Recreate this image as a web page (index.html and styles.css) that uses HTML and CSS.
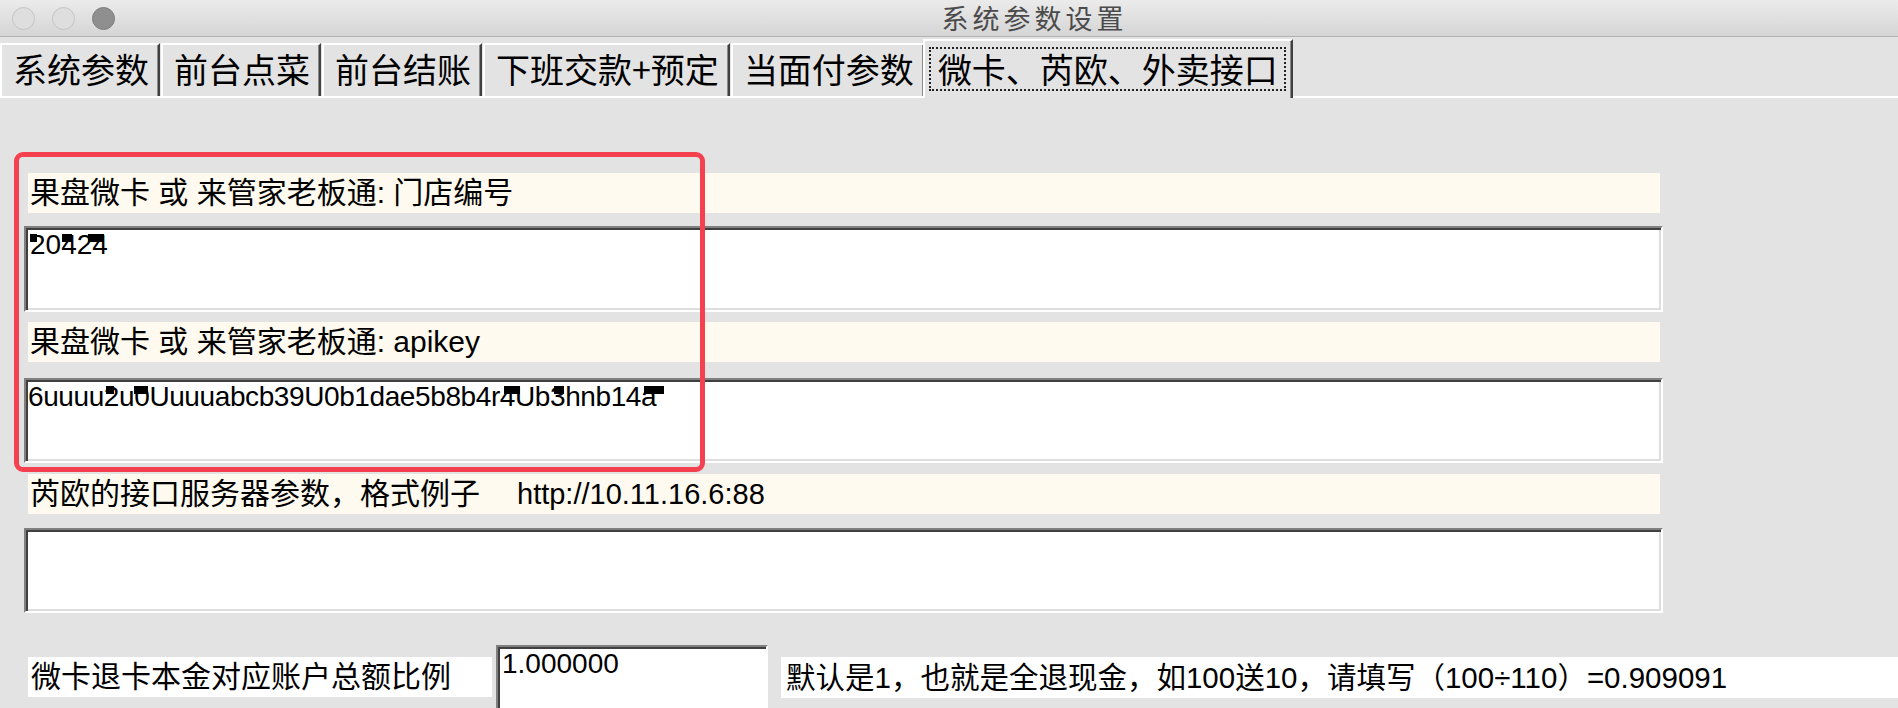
FILE: index.html
```html
<!DOCTYPE html>
<html>
<head>
	<meta charset="utf-8">
	<title>系统参数设置</title>
	<link rel="stylesheet" href="styles.css">
</head>
<body>
<div class="window">
	<div class="titlebar">
		<div class="lights">
			<span class="light"></span>
			<span class="light"></span>
			<span class="light light-dark"></span>
		</div>
		<div class="title">系统参数设置</div>
	</div>

	<div class="tabs">
		<a class="tab">系统参数</a>
		<a class="tab">前台点菜</a>
		<a class="tab">前台结账</a>
		<a class="tab">下班交款+预定</a>
		<a class="tab">当面付参数</a>
		<a class="tab active"><span class="focus">微卡、芮欧、外卖接口</span></a>
	</div>

	<div class="panel">
		<div class="field-label">果盘微卡 或 来管家老板通: 门店编号</div>
		<div class="field-input input-1">20424
			<i class="mask" style="left: 4px; width: 7px;"></i>
			<i class="mask" style="left: 36px; width: 10px;"></i>
			<i class="mask" style="left: 62px; width: 16px;"></i>
		</div>

		<div class="field-label label-2">果盘微卡 或 来管家老板通: apikey</div>
		<div class="field-input input-2">6uuuu2u0Uuuuabcb39U0b1dae5b8b4r4Ub3hnb14a
			<i class="mask" style="left: 80px; width: 8px;"></i>
			<i class="mask" style="left: 108px; width: 14px;"></i>
			<i class="mask" style="left: 478px; width: 16px;"></i>
			<i class="mask" style="left: 528px; width: 10px;"></i>
			<i class="mask" style="left: 618px; width: 20px;"></i>
		</div>

		<div class="field-label label-3">芮欧的接口服务器参数，格式例子<span class="example">http://10.11.16.6:88</span></div>
		<div class="field-input input-3"></div>

		<div class="ratio-row">
			<div class="ratio-label">微卡退卡本金对应账户总额比例</div>
			<div class="ratio-input">1.000000</div>
			<div class="ratio-hint">默认是1，也就是全退现金，如100送10，请填写（100÷110）=0.909091</div>
		</div>
	</div>

	<div class="highlight"></div>
</div>
</body>
</html>
```

FILE: styles.css
```css
	html, body {margin: 0; padding: 0;}
	body {width: 1898px; height: 708px; overflow: hidden; background-color: #e3e3e3; font-family: "Liberation Sans", "Noto Sans CJK SC", sans-serif; color: #000;}
	.window {position: relative; height: 708px;}

/* title bar */
	.titlebar {display: flex; align-items: center; height: 36px; border-bottom: 1px solid #b2b2b2; background: linear-gradient(#ebebeb, #d5d5d5);}
	.lights {display: flex; gap: 17px; padding-left: 12px;}
	.light {display: block; width: 21px; height: 21px; border: 1px solid #c4c4c4; border-radius: 50%; background-color: #dedede;}
	.light-dark {border-color: #7c7c7c; background-color: #8f8f8f;}
	.title {flex: 1; padding-left: 56px; text-align: center; font-family: "Noto Sans CJK SC", sans-serif; font-size: 27px; letter-spacing: 4px; line-height: 36px; color: #4b4b4b;}

/* tabs */
	.tabs {display: flex; align-items: flex-end; height: 53px; padding-top: 6px; background-color: #e3e3e3;}
	.tab {display: block; box-sizing: border-box; height: 53px; margin-right: 1px; padding: 0 9px 0 11px; border-top: 2px solid #fff; border-left: 2px solid #fff; border-right: 2px solid #404040; box-shadow: inset -1px 0 0 #8a8a8a; font-family: "Noto Sans CJK SC", sans-serif; font-size: 34px; line-height: 48px; white-space: nowrap; color: #000; background-color: #e3e3e3;}
	.tab.active {position: relative; z-index: 2; height: 59px; margin: 0 0 -2px -3px; padding: 6px 5px 0 4px; line-height: 40px;}
	.tab .focus {display: block; height: 40px; padding: 0 6px 0 7px; border: 2px dotted #222;}

/* form panel */
	.panel {padding: 75px 0 0 24px; border-top: 2px solid #fff;}
	.field-label {box-sizing: border-box; width: 1632px; height: 40px; margin-left: 4px; padding-left: 2px; font-size: 30px; line-height: 40px; white-space: nowrap; background-color: #fefaef;}
	.field-label .example {margin-left: 37px; font-size: 29px;}
	.field-input {position: relative; box-sizing: border-box; width: 1639px; height: 86px; margin-top: 13px; padding: 2px 4px; border: 2px solid; border-color: #808080 #fff #fff #808080; box-shadow: inset 2px 2px 0 #404040, inset -2px -2px 0 #dedede; font-size: 28px; line-height: 30px; white-space: nowrap; background-color: #fff;}
	.field-input .mask {position: absolute; top: 6px; height: 8px; background-color: #000;}

	.label-2 {margin-top: 10px;}
	.input-2 {height: 85px; margin-top: 16px; padding-left: 2px; letter-spacing: -0.4px;}
	.label-3 {margin-top: 11px;}
	.input-3 {height: 85px; margin-top: 14px;}

/* ratio row */
	.ratio-row {display: flex; align-items: flex-start; margin-top: 32px;}
	.ratio-label {box-sizing: border-box; width: 464px; height: 40px; margin: 12px 0 0 4px; padding-left: 3px; font-size: 30px; line-height: 40px; white-space: nowrap; background-color: #fff;}
	.ratio-input {box-sizing: border-box; width: 272px; height: 90px; margin-left: 4px; padding: 2px 4px; border: 2px solid; border-color: #808080 #fff #fff #808080; box-shadow: inset 2px 2px 0 #404040; font-size: 28px; line-height: 30px; background-color: #fff;}
	.ratio-hint {flex: 1; height: 41px; margin: 12px 0 0 13px; padding-left: 5px; font-size: 29.5px; line-height: 41px; white-space: nowrap; background-color: #fff;}

/* annotation */
	.highlight {position: absolute; left: 14px; top: 152px; box-sizing: border-box; width: 691px; height: 320px; border: 5px solid #f4404f; border-radius: 9px;}
```
